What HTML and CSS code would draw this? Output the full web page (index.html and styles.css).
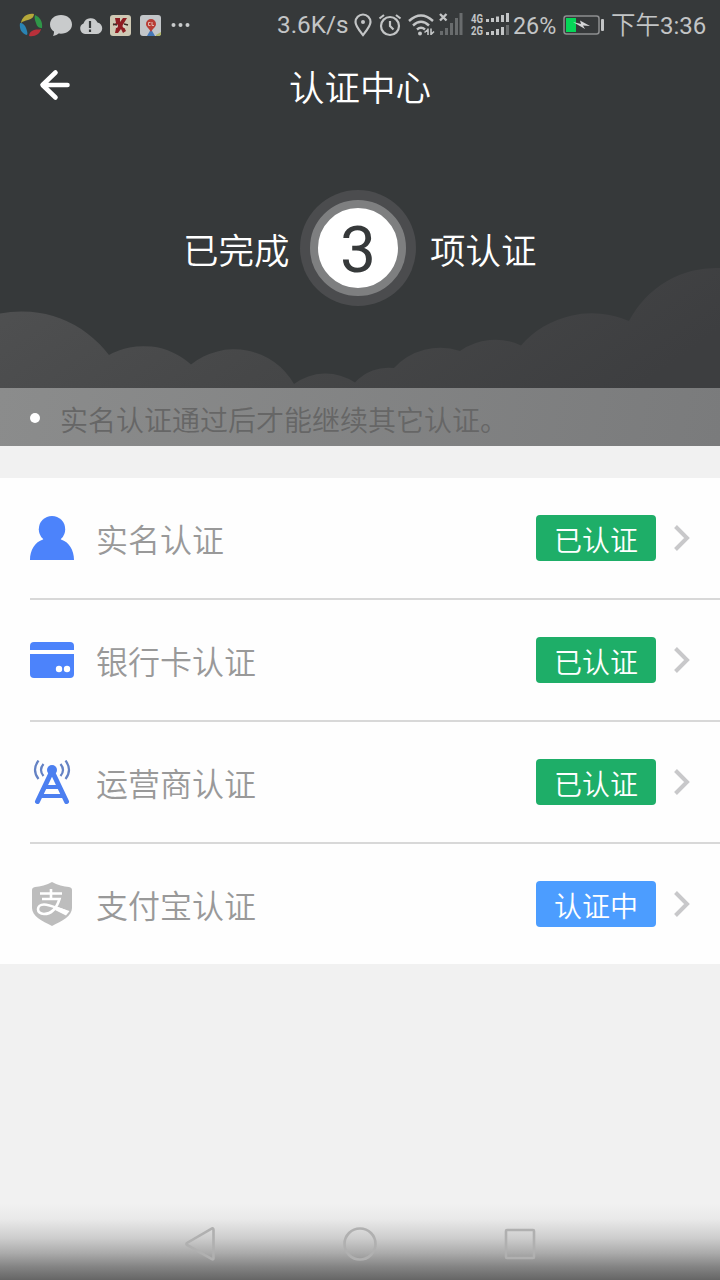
FILE: index.html
```html
<!DOCTYPE html>
<html lang="zh-CN">
<head>
    <meta charset="UTF-8">
    <meta name="viewport" content="width=device-width, initial-scale=1.0">
    <title>认证中心</title>
    <link rel="stylesheet" href="styles.css">
</head>
<body>
    <div class="page">
        <header class="header">
            <svg class="clouds" viewBox="0 260 720 186" width="720" height="186">
                <defs>
                    <linearGradient id="cloud" x1="0" y1="0" x2="1" y2="0.35">
                        <stop offset="0" stop-color="#505152"/>
                        <stop offset="0.5" stop-color="#464748"/>
                        <stop offset="1" stop-color="#3d3e40"/>
                    </linearGradient>
                </defs>
                <path fill="url(#cloud)" d="M0 313.5A110 110 0 0 1 109 355A71 71 0 0 1 191 364.500A69 69 0 0 1 294 384A53 53 0 0 1 355 382.500A45 45 0 0 1 394 368A63 63 0 0 1 460 351A61 61 0 0 1 521 345.500A94 94 0 0 1 629 321A98 98 0 0 1 720 268V446H0Z"/>
            </svg>

            <div class="status-bar">
                <div class="notifications">
                    <svg width="24" height="24" viewBox="0 0 24 24">
                        <path fill="#b5a83a" d="M2 10C3 4 8 0 15 1C15 4 13 6 9 7C6 8 4 8 2 10Z"/>
                        <path fill="#2f9648" d="M16 2C21 4 24 9 23 15C20 15 18 14 17 10C16 7 15 5 16 2Z"/>
                        <path fill="#b8303a" d="M22 16C21 21 16 24 10 23C10 20 12 18 15 17C18 16 20 17 22 16Z"/>
                        <path fill="#2a84b4" d="M1 10C4 10 6 12 7 15C8 18 9 20 8 22C3 21 0 16 1 10Z"/>
                    </svg>
                    <svg width="24" height="24" viewBox="0 0 24 24">
                        <path fill="#c9cbcc" d="M12 2C5.500 2 1 6 1 11.500C1 14.500 2.500 17 5 18.500C5 20.500 4.500 22 4 23C6.500 22.500 8.500 21.500 9.500 20.500C17 21.500 23 17.500 23 11.500C23 6 18.500 2 12 2Z"/>
                    </svg>
                    <svg width="24" height="24" viewBox="0 0 24 24">
                        <path fill="#c9cbcc" d="M6 21A5.500 5.500 0 0 1 4.500 10.500A7.500 7.500 0 0 1 18.500 9.500A5.800 5.800 0 0 1 17.500 21Z"/>
                        <path stroke="#36393a" stroke-width="2.200" d="M11 8V15M11 16.500V19"/>
                    </svg>
                    <svg width="24" height="24" viewBox="0 0 24 24">
                        <rect x="1" y="2" width="21" height="21" rx="3" fill="#cfc9b4"/>
                        <path fill="#8f1d22" d="M6 5H11V9L14 5H18L15 10L14 12L17 18L14 20L12 16L9 20H6L7 15L4 12L7 10Z"/>
                        <circle cx="7" cy="13" r="2" fill="#d9d2c2"/>
                        <circle cx="15.500" cy="13" r="2" fill="#d9d2c2"/>
                        <path stroke="#3b2b25" stroke-width="1.500" d="M4 11L8 12M15 11L19 12"/>
                    </svg>
                    <svg width="24" height="24" viewBox="0 0 24 24">
                        <rect x="1" y="2" width="21" height="21" rx="3" fill="#c3c6c9"/>
                        <path fill="#4477b5" d="M12 16L8 23H16Z"/>
                        <path fill="#b0b66a" d="M17 22L22 19V22L20 23H17Z"/>
                        <path fill="#b93c35" d="M12 6A5 5 0 0 1 17 11C17 14 14 15 12 19C10 15 7 14 7 11A5 5 0 0 1 12 6Z"/>
                        <path fill="none" stroke="#e0b9b0" d="M11.500 9.500H9.500V12.500H11.500M13 9V12.500H15"/>
                    </svg>
                    <svg width="24" height="24" viewBox="0 0 24 24" fill="#c9cbcc">
                        <circle cx="4.500" cy="12" r="2"/>
                        <circle cx="11.500" cy="12" r="2"/>
                        <circle cx="18.500" cy="12" r="2"/>
                    </svg>
                </div>
                <div class="system">
                    <span class="speed">3.6K/s</span>
                    <svg class="ic-pin" width="20" height="24" viewBox="0 0 20 24">
                        <path fill="none" stroke="#c3c5c6" stroke-width="2.200" d="M10 22C6 17 2.500 13 2.500 9A7.500 7.500 0 0 1 17.500 9C17.500 13 14 17 10 22Z"/>
                        <circle cx="10" cy="9" r="2" fill="#c3c5c6"/>
                    </svg>
                    <svg class="ic-alarm" width="24" height="24" viewBox="0 0 24 24" fill="none" stroke="#c3c5c6" stroke-width="2.200">
                        <circle cx="12" cy="13" r="9"/>
                        <path d="M12 8V13L15.500 16.500M1.500 5.500L6 2M22.500 5.500L18 2"/>
                    </svg>
                    <svg class="ic-wifi" width="28" height="24" viewBox="0 0 28 24" fill="none" stroke="#c3c5c6" stroke-width="2.400">
                        <path d="M1 8Q13 -3 25 8M5 12.500Q13 5 21 12.500M9 16.500Q13 13 17 16.500"/>
                        <circle cx="12" cy="20.500" r="2" fill="#c3c5c6" stroke="none"/>
                        <path stroke-width="1.600" d="M20 15.500V22M16.500 19.500L20 16.500M23 15.500V22M23 21.500L26 18.500"/>
                    </svg>
                    <svg class="ic-nosim" width="24" height="24" viewBox="0 0 24 24">
                        <path stroke="#c3c5c6" stroke-width="2.400" d="M1 1L7.500 7.500M7.500 1L1 7.500"/>
                        <path stroke="#696c6d" stroke-width="3" d="M2.500 22V18M7.500 22V15M12.500 22V10M17.500 22V5M22 22V0"/>
                    </svg>
                    <svg class="ic-signal" width="39" height="24" viewBox="0 0 39 24">
                        <text class="net" x="0" y="9.500" textLength="12" lengthAdjust="spacingAndGlyphs">4G</text>
                        <text class="net" x="0" y="22" textLength="12" lengthAdjust="spacingAndGlyphs">2G</text>
                        <path stroke="#c3c5c6" stroke-width="3" d="M16.500 9V6M21.500 9V5M26.500 9V3.500M31.500 9V2M36.500 9V0M16.500 22V19M21.500 22V18M26.500 22V16M31.500 22V14"/>
                        <path stroke="#696c6d" stroke-width="3" d="M36.500 22V12"/>
                    </svg>
                    <span class="percent">26%</span>
                    <svg class="ic-battery" width="42" height="20" viewBox="0 0 42 20">
                        <rect x="1" y="1" width="35" height="18" rx="2.500" fill="none" stroke="#8d8f90" stroke-width="1.500"/>
                        <rect x="3" y="3" width="10" height="14" fill="#05d657"/>
                        <path fill="#d5d6d7" d="M10 7L18 9L17 5.500L27 11L20 10.500L22 14Z"/>
                        <rect x="38" y="4" width="3" height="12" rx="1" fill="#c3c5c6"/>
                    </svg>
                    <span class="time">下午<b>3:36</b></span>
                </div>
            </div>

            <div class="title-bar">
                <svg class="back" width="32" height="32" viewBox="0 0 32 32" fill="none" stroke="#fff" stroke-width="4.600" stroke-linecap="round" stroke-linejoin="round">
                    <path d="M16.500 3.500L3.500 16L16.500 28.500M4 16H28.500"/>
                </svg>
                <h1>认证中心</h1>
            </div>

            <div class="summary">
                <span class="before">已完成</span>
                <div class="ring"><div class="count">3</div></div>
                <span class="after">项认证</span>
            </div>

            <div class="notice">
                <span class="dot"></span>
                <p>实名认证通过后才能继续其它认证。</p>
            </div>
        </header>

        <main class="list">
            <div class="item">
                <svg class="icon" width="44" height="44" viewBox="0 0 44 44" fill="#4c83fb">
                    <circle cx="22" cy="13.200" r="13.200"/>
                    <path d="M0 44C0 34 5 26 13 23.500L14 22H30L31 23.500C39 26 44 34 44 44Z"/>
                </svg>
                <span class="name">实名认证</span>
                <span class="tag">已认证</span>
                <svg class="arrow" width="18" height="28" viewBox="0 0 18 28"><path d="M2.500 2.500L14 14L2.500 25.500"/></svg>
            </div>
            <div class="item">
                <svg class="icon" width="44" height="44" viewBox="0 0 44 44">
                    <rect y="4" width="44" height="36" rx="4" fill="#4c83fb"/>
                    <path fill="#fff" d="M0 12H44V16H0Z"/>
                    <circle cx="29" cy="31" r="3.200" fill="#fff"/>
                    <circle cx="37" cy="31" r="3.200" fill="#fff"/>
                </svg>
                <span class="name">银行卡认证</span>
                <span class="tag">已认证</span>
                <svg class="arrow" width="18" height="28" viewBox="0 0 18 28"><path d="M2.500 2.500L14 14L2.500 25.500"/></svg>
            </div>
            <div class="item">
                <svg class="icon" width="44" height="44" viewBox="0 0 44 44" fill="none" stroke="#4c7ff0" stroke-linecap="round">
                    <circle cx="22" cy="10" r="5" fill="#4c7ff0" stroke="none"/>
                    <path stroke-width="5" d="M22 11L7.500 41.500M22 11L36.500 41.500"/>
                    <path stroke-width="4" d="M16 27H28M12 36H32"/>
                    <path stroke="#6482c4" stroke-width="2.200" stroke-linecap="butt" d="M13.500 4Q8.500 10 13.500 16M8.500 .5Q1.500 10 8.500 19M30.500 4Q35.500 10 30.500 16M35.500 .5Q42.500 10 35.500 19"/>
                </svg>
                <span class="name">运营商认证</span>
                <span class="tag">已认证</span>
                <svg class="arrow" width="18" height="28" viewBox="0 0 18 28"><path d="M2.500 2.500L14 14L2.500 25.500"/></svg>
            </div>
            <div class="item">
                <svg class="icon" width="44" height="44" viewBox="0 0 44 44">
                    <path fill="#bdbdbd" d="M22 0C27 3 34 4.500 39 5Q42 5.500 42 8V26C42 34 32 39 22 44C12 39 2 34 2 26V8Q2 5.500 5 5C10 4.500 17 3 22 0Z"/>
                    <g fill="none" stroke="#fff" stroke-width="2.600">
                        <path d="M10 11.500H32M21 7V17M12 17H29.500C27 25 22 32 14 32C6 32 6 22.500 14 22.500C20 22.500 26 26 36 29.500"/>
                    </g>
                    <path fill="#fff" d="M26 24.500L39.500 29L36 33.500L25 28Z"/>
                </svg>
                <span class="name">支付宝认证</span>
                <span class="tag pending">认证中</span>
                <svg class="arrow" width="18" height="28" viewBox="0 0 18 28"><path d="M2.500 2.500L14 14L2.500 25.500"/></svg>
            </div>
        </main>

        <nav class="nav-bar">
            <svg width="32" height="36" viewBox="0 0 32 36"><path d="M28 2.500Q29.500 2 29.500 4V32Q29.500 34 28 33L3 19Q2 18 3 17Z"/></svg>
            <svg width="36" height="36" viewBox="0 0 36 36"><circle cx="18" cy="18" r="15.500"/></svg>
            <svg width="32" height="36" viewBox="0 0 32 36"><rect x="2" y="4" width="28" height="28" rx="1"/></svg>
        </nav>
    </div>
</body>
</html>
```
FILE: styles.css
```css
* {
    margin: 0;
    padding: 0;
    box-sizing: border-box;
}

body {
    font-family: Roboto, 'Noto Sans CJK SC', sans-serif;
    font-weight: 350;
    background: #f1f1f1;
}

svg {
    display: block;
    flex: none;
}

.page {
    height: 1280px;
    display: flex;
    flex-direction: column;
    overflow: hidden;
}

.header {
    position: relative;
    height: 446px;
    background: #36393a;
    color: #fff;
    display: flex;
    flex-direction: column;
}

.clouds {
    position: absolute;
    left: 0;
    bottom: 0;
}

/* status bar */
.status-bar {
    height: 50px;
    padding: 0 16px 0 19px;
    display: flex;
    justify-content: space-between;
    align-items: center;
    color: #c3c5c6;
    font-weight: 400;
}

.notifications {
    display: flex;
    gap: 6px;
    margin-bottom: 1px;
}

.system {
    display: flex;
    align-items: center;
    font-size: 24px;
    line-height: 30px;
    white-space: nowrap;
}

.speed {
    width: 69px;
    font-size: 24.3px;
}

.ic-pin {
    margin-left: 7px;
}

.ic-alarm {
    margin-left: 5px;
}

.ic-wifi {
    margin-left: 6px;
}

.ic-nosim {
    margin-left: 3px;
}

.ic-signal {
    margin-left: 8px;
    overflow: visible;
}

.net {
    font-size: 12px;
    font-weight: 700;
    fill: #c3c5c6;
}

.percent {
    width: 43px;
    margin-left: 3px;
    padding-top: 2px;
    font-size: 23.3px;
}

.ic-battery {
    margin-left: 7px;
}

.time {
    margin-left: 6px;
    width: 93px;
    padding-top: 2px;
    font-size: 24.5px;
    font-weight: 350;
}

.time b {
    font-size: 24px;
    font-weight: 400;
}

/* title */
.title-bar {
    height: 70px;
    padding: 0 39px;
    display: grid;
    grid-template-columns: 32px 1fr 32px;
    align-items: center;
}

.title-bar h1 {
    padding-top: 9px;
    text-align: center;
    font-size: 35.5px;
    line-height: 61px;
    font-weight: 350;
}

.summary {
    height: 268px;
    padding: 70px 0 82px 183px;
    display: flex;
    align-items: center;
    font-size: 35.5px;
    line-height: 52px;
}

.before,
.after {
    width: 107px;
    padding-top: 7px;
    white-space: nowrap;
}

.ring {
    width: 116px;
    height: 116px;
    margin: 0 14px 0 10px;
    border-radius: 50%;
    background: #4b4c4e;
    display: flex;
    align-items: center;
    justify-content: center;
}

.count {
    width: 96px;
    height: 96px;
    border: 8px solid #7e7f80;
    border-radius: 50%;
    background: #fff;
    color: #36393a;
    font-size: 64px;
    font-weight: 400;
    line-height: 85px;
    text-align: center;
}

.notice {
    position: relative;
    height: 58px;
    padding-left: 30px;
    display: flex;
    align-items: center;
    background: linear-gradient(100deg, #8b8c8c, #7a7b7c);
    color: #666;
}

.dot {
    width: 10px;
    height: 10px;
    margin-top: 2px;
    border-radius: 50%;
    background: #fff;
}

.notice p {
    padding-top: 10px;
    margin-left: 20px;
    font-size: 28px;
    line-height: 48px;
}

/* list */
.list {
    margin-top: 32px;
    background: #fefefe;
}

.item {
    height: 122px;
    margin-left: 30px;
    padding-right: 29px;
    display: flex;
    align-items: center;
    border-bottom: 2px solid #d8d8d8;
}

.item:last-child {
    height: 120px;
    border-bottom: none;
}

.name {
    flex: 1;
    margin-left: 22px;
    font-size: 32px;
    color: #999;
}

.tag {
    width: 120px;
    height: 46px;
    padding-top: 4px;
    border-radius: 4px;
    background: #1eae68;
    color: #fff;
    font-size: 28px;
    line-height: 46px;
    text-align: center;
}

.tag.pending {
    background: #4c9dff;
}

.arrow {
    margin-left: 17px;
    fill: none;
    stroke: #c8c8ca;
    stroke-width: 4;
}

/* navigation keys */
.nav-bar {
    height: 76px;
    margin-top: auto;
    padding-top: 4px;
    display: flex;
    justify-content: center;
    align-items: center;
    gap: 126px;
    background: linear-gradient(#f1f1f1 0%, #e9e9e9 20%, #cdcdcd 45%, #aaa 65%, #858585 82%, #656565 100%);
}

.nav-bar svg {
    fill: none;
    stroke: #b0b0b0;
    stroke-width: 2.6;
}
```
